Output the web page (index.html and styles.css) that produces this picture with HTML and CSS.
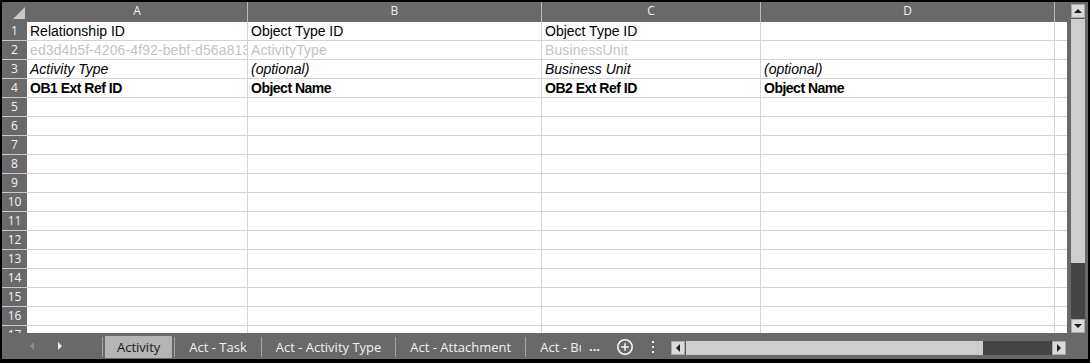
FILE: index.html
```html
<!DOCTYPE html>
<html>
<head>
<meta charset="utf-8">
<link rel="stylesheet" href="styles.css">
</head>
<body>
<div class="app">
  <div class="main">
    <div class="sheet">
      <div class="row head">
        <div class="corner"><svg width="25" height="20" viewBox="0 0 25 20"><polygon points="23,5 23,17 11,17" fill="#c9c9c9"/></svg></div>
        <div class="ch">A</div><div class="ch">B</div><div class="ch">C</div><div class="ch">D</div><div class="ch last"></div>
      </div>
      <div class="row"><div class="rn">1</div><div class="c">Relationship ID</div><div class="c">Object Type ID</div><div class="c">Object Type ID</div><div class="c"></div><div class="c last"></div></div>
      <div class="row muted"><div class="rn">2</div><div class="c">ed3d4b5f-4206-4f92-bebf-d56a813c9e21</div><div class="c">ActivityType</div><div class="c">BusinessUnit</div><div class="c"></div><div class="c last"></div></div>
      <div class="row it"><div class="rn">3</div><div class="c">Activity Type</div><div class="c">(optional)</div><div class="c">Business Unit</div><div class="c">(optional)</div><div class="c last"></div></div>
      <div class="row bd"><div class="rn">4</div><div class="c">OB1 Ext Ref ID</div><div class="c">Object Name</div><div class="c">OB2 Ext Ref ID</div><div class="c">Object Name</div><div class="c last"></div></div>
      <div class="row"><div class="rn">5</div><div class="c"></div><div class="c"></div><div class="c"></div><div class="c"></div><div class="c last"></div></div>
      <div class="row"><div class="rn">6</div><div class="c"></div><div class="c"></div><div class="c"></div><div class="c"></div><div class="c last"></div></div>
      <div class="row"><div class="rn">7</div><div class="c"></div><div class="c"></div><div class="c"></div><div class="c"></div><div class="c last"></div></div>
      <div class="row"><div class="rn">8</div><div class="c"></div><div class="c"></div><div class="c"></div><div class="c"></div><div class="c last"></div></div>
      <div class="row"><div class="rn">9</div><div class="c"></div><div class="c"></div><div class="c"></div><div class="c"></div><div class="c last"></div></div>
      <div class="row"><div class="rn">10</div><div class="c"></div><div class="c"></div><div class="c"></div><div class="c"></div><div class="c last"></div></div>
      <div class="row"><div class="rn">11</div><div class="c"></div><div class="c"></div><div class="c"></div><div class="c"></div><div class="c last"></div></div>
      <div class="row"><div class="rn">12</div><div class="c"></div><div class="c"></div><div class="c"></div><div class="c"></div><div class="c last"></div></div>
      <div class="row"><div class="rn">13</div><div class="c"></div><div class="c"></div><div class="c"></div><div class="c"></div><div class="c last"></div></div>
      <div class="row"><div class="rn">14</div><div class="c"></div><div class="c"></div><div class="c"></div><div class="c"></div><div class="c last"></div></div>
      <div class="row"><div class="rn">15</div><div class="c"></div><div class="c"></div><div class="c"></div><div class="c"></div><div class="c last"></div></div>
      <div class="row"><div class="rn">16</div><div class="c"></div><div class="c"></div><div class="c"></div><div class="c"></div><div class="c last"></div></div>
      <div class="row"><div class="rn">17</div><div class="c"></div><div class="c"></div><div class="c"></div><div class="c"></div><div class="c last"></div></div>
    </div>
    <div class="vscroll">
      <div class="sbtn"><span class="arr up"></span></div>
      <div class="vthumb"></div>
      <div class="vtrack"></div>
      <div class="sbtn"><span class="arr down"></span></div>
    </div>
  </div>
  <div class="tabbar">
    <div class="nav">
      <svg width="100" height="26" viewBox="0 0 100 26"><polygon points="28,13 32,9 32,17" fill="#8d8d8d"/><polygon points="60,13 56,9 56,17" fill="#ececec"/></svg>
    </div>
    <div class="tsep"></div>
    <div class="tabs">
      <div class="tab active">Activity</div><div class="tsep"></div>
      <div class="tab">Act - Task</div><div class="tsep"></div>
      <div class="tab">Act - Activity Type</div><div class="tsep"></div>
      <div class="tab">Act - Attachment</div><div class="tsep"></div>
      <div class="tab">Act - Business Unit</div>
    </div>
    <div class="more">...</div>
    <div class="add"><svg width="18" height="18" viewBox="0 0 18 18"><circle cx="9" cy="9" r="7.2" fill="none" stroke="#f4f4f4" stroke-width="1.6"/><path d="M9 5.2V12.8M5.2 9H12.8" stroke="#f4f4f4" stroke-width="1.6"/></svg></div>
    <div class="kebab"><svg width="4" height="14" viewBox="0 0 4 14"><rect x="1" y="1" width="2" height="2" fill="#f0f0f0"/><rect x="1" y="6" width="2" height="2" fill="#f0f0f0"/><rect x="1" y="11" width="2" height="2" fill="#f0f0f0"/></svg></div>
    <div class="hscroll">
      <div class="sbtn h"><span class="arr left"></span></div>
      <div class="hthumb"></div>
      <div class="htrack"></div>
      <div class="sbtn h"><span class="arr right"></span></div>
    </div>
  </div>
</div>
</body>
</html>
```

FILE: styles.css
```css
* { box-sizing: border-box; }
html, body { margin: 0; padding: 0; background: #000; }
.app {
  width: 1090px;
  height: 363px;
  padding: 2px 2px 4px 2px;
  background: #000;
  display: flex;
  flex-direction: column;
}
.main {
  height: 331px;
  display: flex;
  background: #696969;
}
.sheet {
  width: 1065px;
  height: 331px;
  overflow: hidden;
  background: #fff;
  display: flex;
  flex-direction: column;
}
.row {
  flex: 0 0 19px;
  height: 19px;
  display: grid;
  grid-template-columns: 25px 221px 294px 219px 294px 1fr;
  font-family: "Liberation Sans", Arial, sans-serif;
  font-size: 14px;
  color: #000;
}
.row.head {
  flex: 0 0 20px;
  height: 20px;
  background: #696969;
}
.corner { background: #696969; height: 20px; }
.corner svg { display: block; }
.ch {
  border-right: 1px solid #b9b9b9;
  color: #f0f0f0;
  font-family: "Open Sans", sans-serif;
  font-size: 12px;
  line-height: 18px;
  text-align: center;
}
.ch.last { border-right: 0; }
.rn {
  background: #696969;
  color: #f2f2f2;
  border-bottom: 1px solid #c9c9c9;
  font-family: "Open Sans", sans-serif;
  font-size: 12px;
  line-height: 18px;
  text-align: center;
}
.c {
  border-right: 1px solid #d4d4d4;
  border-bottom: 1px solid #d4d4d4;
  padding: 0 3px;
  line-height: 18px;
  white-space: nowrap;
  overflow: hidden;
}
.c.last { border-right: 0; }
.muted .c { color: #c3c3c3; letter-spacing: 0.1px; }
.it .c { font-style: italic; }
.bd .c { font-weight: bold; letter-spacing: -0.5px; }

.vscroll {
  width: 21px;
  padding: 2px 3px 0 4px;
  display: flex;
  flex-direction: column;
}
.sbtn {
  flex: 0 0 14px;
  height: 14px;
  background: #dadada;
  border: 1px solid #a9a9a9;
  display: flex;
  align-items: center;
  justify-content: center;
}
.sbtn.h { width: 14px; }
.vthumb { flex: 0 0 245px; background: #cecece; border-top: 1px solid #5a5a5a; }
.vtrack { flex: 1; background: #444; }
.arr { width: 0; height: 0; display: block; }
.arr.up { border-left: 4px solid transparent; border-right: 4px solid transparent; border-bottom: 4px solid #1e1e1e; }
.arr.down { border-left: 4px solid transparent; border-right: 4px solid transparent; border-top: 4px solid #1e1e1e; }
.arr.left { border-top: 4px solid transparent; border-bottom: 4px solid transparent; border-right: 4px solid #1e1e1e; }
.arr.right { border-top: 4px solid transparent; border-bottom: 4px solid transparent; border-left: 4px solid #1e1e1e; }

.tabbar {
  height: 26px;
  background: #696969;
  display: flex;
  align-items: flex-start;
  padding-top: 3px;
  font-family: "Open Sans", sans-serif;
  font-size: 13px;
  color: #f2f2f2;
}
.nav { width: 100px; height: 22px; margin-top: -3px; }
.nav svg { display: block; }
.tsep {
  flex: 0 0 1px;
  width: 1px;
  height: 20px;
  margin-top: 1px;
  background: #a4a4a4;
}
.tabs {
  width: 478px;
  display: flex;
  overflow: hidden;
  white-space: nowrap;
}
.tab {
  height: 22px;
  line-height: 22px;
  padding: 0 13px;
  margin: 0 1px;
  flex: 0 0 auto;
}
.tab.active {
  background: #b5b5b5;
  color: #1a1a1a;
  padding: 0 12px;
  margin: 0 2px;
}
.more {
  width: 27px;
  height: 22px;
  line-height: 20px;
  text-align: center;
  font-weight: bold;
}
.add {
  width: 34px;
  height: 22px;
  display: flex;
  align-items: center;
  justify-content: center;
}
.add svg, .kebab svg { display: block; }
.kebab {
  width: 22px;
  height: 22px;
  display: flex;
  align-items: center;
  justify-content: center;
}
.hscroll {
  width: 395px;
  height: 14px;
  margin-left: 7px;
  margin-top: 5px;
  display: flex;
}
.hthumb { flex: 0 0 298px; background: #cecece; border-left: 1px solid #5a5a5a; }
.htrack { flex: 1; background: #444; }
```
